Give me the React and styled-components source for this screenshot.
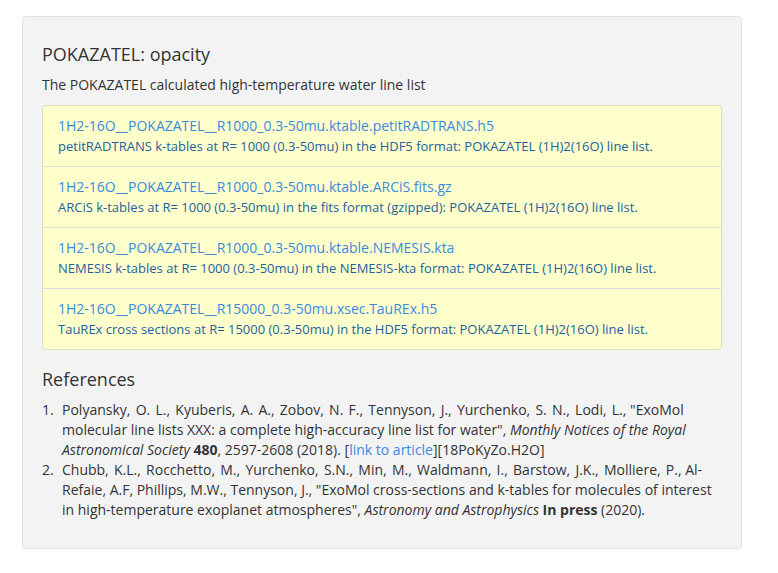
import React from 'react';
import styled, { createGlobalStyle } from 'styled-components';

const GlobalStyle = createGlobalStyle`
    body {
        margin: 0;
        background: #ffffff;
        font-family: 'Open Sans', 'Noto Sans', sans-serif;
        color: #333333;
    }
`;

const files = [
    {
        name: '1H2-16O__POKAZATEL__R1000_0.3-50mu.ktable.petitRADTRANS.h5',
        desc: 'petitRADTRANS k-tables at R= 1000 (0.3-50mu) in the HDF5 format: POKAZATEL (1H)2(16O) line list.',
    },
    {
        name: '1H2-16O__POKAZATEL__R1000_0.3-50mu.ktable.ARCiS.fits.gz',
        desc: 'ARCiS k-tables at R= 1000 (0.3-50mu) in the fits format (gzipped): POKAZATEL (1H)2(16O) line list.',
    },
    {
        name: '1H2-16O__POKAZATEL__R1000_0.3-50mu.ktable.NEMESIS.kta',
        desc: 'NEMESIS k-tables at R= 1000 (0.3-50mu) in the NEMESIS-kta format: POKAZATEL (1H)2(16O) line list.',
    },
    {
        name: '1H2-16O__POKAZATEL__R15000_0.3-50mu.xsec.TauREx.h5',
        desc: 'TauREx cross sections at R= 15000 (0.3-50mu) in the HDF5 format: POKAZATEL (1H)2(16O) line list.',
    },
];

const App = () => {
    return (
        <Page>
            <GlobalStyle />
            <Well>
                <Heading>POKAZATEL: opacity</Heading>
                <Lead>The POKAZATEL calculated high-temperature water line list</Lead>
                <FileList>
                    {files.map((f) => (
                        <FileItem key={f.name}>
                            <FileLink href="#">{f.name}</FileLink>
                            <FileDesc>{f.desc}</FileDesc>
                        </FileItem>
                    ))}
                </FileList>
                <Heading>References</Heading>
                <RefList>
                    <RefItem>
                        <Authors>
                            Polyansky, O. L., Kyuberis, A. A., Zobov, N. F., Tennyson, J., Yurchenko, S. N., Lodi, L.,
                        </Authors>{' '}
                        "ExoMol molecular line lists XXX: a complete high-accuracy line list for water",{' '}
                        <em>Monthly Notices of the Royal Astronomical Society</em> <b>480</b>, 2597-2608 (2018). [
                        <RefLink href="#">link to article</RefLink>][18PoKyZo.H2O]
                    </RefItem>
                    <RefItem>
                        <Authors>
                            Chubb, K.L., Rocchetto, M., Yurchenko, S.N., Min, M., Waldmann, I., Barstow, J.K., Molliere, P.,
                        </Authors>{' '}
                        Al-Refaie, A.F, Phillips, M.W., Tennyson, J., "ExoMol cross-sections and k-tables for molecules of
                        interest in high-temperature exoplanet atmospheres", <em>Astronomy and Astrophysics</em>{' '}
                        <b>In press</b> (2020).
                    </RefItem>
                </RefList>
            </Well>
        </Page>
    );
};

export default App;
/*--------------------------------------
------------Styled Components-----------
--------------------------------------*/
const Page = styled.div`
    padding: 16px 0 0 22px;
`;

const Well = styled.div`
    box-sizing: border-box;
    width: 720px;
    min-height: 533px;
    padding: 19px 19px 20px;
    background: #f3f3f3;
    border: 1px solid #e1e1e1;
    border-radius: 4px;
`;

const Heading = styled.h4`
    margin: 8px 0 11px;
    font-size: 18px;
    font-weight: 400;
    line-height: 20px;
    color: #333333;
`;

const Lead = styled.p`
    margin: 0 0 10px;
    font-size: 14px;
    line-height: 20px;
`;

const FileList = styled.div`
    display: flex;
    flex-direction: column;
    margin-bottom: 19px;
    border: 1px solid #dcdcc0;
    border-radius: 4px;
    background: #ffffcc;
`;

const FileItem = styled.div`
    display: flex;
    flex-direction: column;
    padding: 10px 15px;
    border-top: 1px solid #dddddd;

    &:first-child {
        border-top: none;
    }
`;

const FileLink = styled.a`
    font-size: 14px;
    line-height: 20px;
    color: #3a8ae0;
    text-decoration: none;
`;

const FileDesc = styled.div`
    font-size: 13px;
    line-height: 20px;
    color: #245f9e;
`;

const RefList = styled.ol`
    margin: 0;
    padding: 0;
    list-style: none;
    counter-reset: ref;
    font-size: 14px;
    line-height: 20px;

    em {
        font-style: italic;
    }
`;

const RefItem = styled.li`
    counter-increment: ref;
    padding-left: 20px;

    &::before {
        content: counter(ref) '.';
        display: inline-block;
        width: 20px;
        margin-left: -20px;
    }
`;

const Authors = styled.span`
    word-spacing: 1.6px;
`;

const RefLink = styled.a`
    color: #3a8ae0;
    text-decoration: none;
`;
